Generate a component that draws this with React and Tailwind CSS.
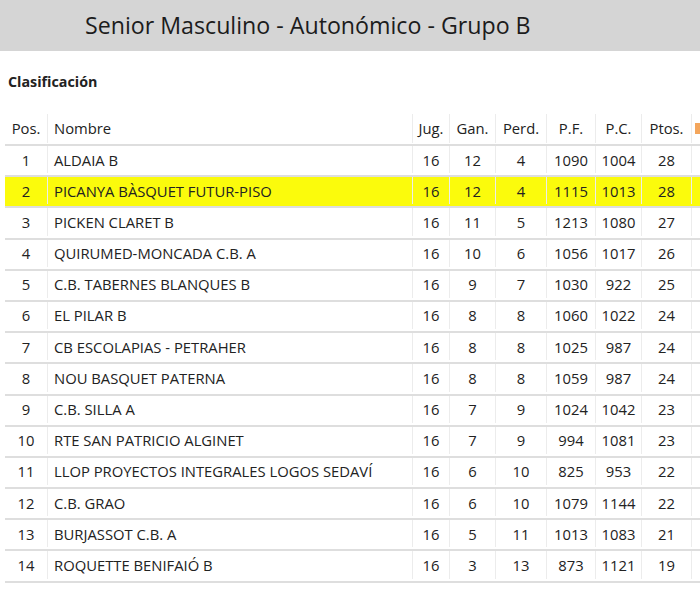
import React from 'react';

const rows = [
  [1, 'ALDAIA B', 16, 12, 4, 1090, 1004, 28],
  [2, 'PICANYA BÀSQUET FUTUR-PISO', 16, 12, 4, 1115, 1013, 28],
  [3, 'PICKEN CLARET B', 16, 11, 5, 1213, 1080, 27],
  [4, 'QUIRUMED-MONCADA C.B. A', 16, 10, 6, 1056, 1017, 26],
  [5, 'C.B. TABERNES BLANQUES B', 16, 9, 7, 1030, 922, 25],
  [6, 'EL PILAR B', 16, 8, 8, 1060, 1022, 24],
  [7, 'CB ESCOLAPIAS - PETRAHER', 16, 8, 8, 1025, 987, 24],
  [8, 'NOU BASQUET PATERNA', 16, 8, 8, 1059, 987, 24],
  [9, 'C.B. SILLA A', 16, 7, 9, 1024, 1042, 23],
  [10, 'RTE SAN PATRICIO ALGINET', 16, 7, 9, 994, 1081, 23],
  [11, 'LLOP PROYECTOS INTEGRALES LOGOS SEDAVÍ', 16, 6, 10, 825, 953, 22],
  [12, 'C.B. GRAO', 16, 6, 10, 1079, 1144, 22],
  [13, 'BURJASSOT C.B. A', 16, 5, 11, 1013, 1083, 21],
  [14, 'ROQUETTE BENIFAIÓ B', 16, 3, 13, 873, 1121, 19],
];

const cols = 'grid grid-cols-[43px_365px_37px_46px_51px_49px_46px_50px_8px]';
const cell = 'flex items-center justify-center border-r border-[#ececec]';

const App = () => {
  return (
    <div className="w-[700px] h-[603px] bg-white text-[#222] overflow-hidden" style={{ fontFamily: '"Open Sans", sans-serif' }}>
      {/* Header band */}
      <div className="h-[51px] bg-[#d5d5d5] flex items-center pl-[85px]">
        <h1 className="text-[23.2px] leading-none text-[#1c1c1c]">Senior Masculino - Autonómico - Grupo B</h1>
      </div>

      <div className="pl-2 pt-[21px] h-[63px]">
        <h2 className="text-[14.3px] font-bold leading-[20px]">Clasificación</h2>
      </div>

      {/* Table */}
      <div className="pl-[5px] text-[14.8px]">
        <div className={`${cols} h-[32px] pb-px border-b-2 border-[#dedede]`}>
          <div className={cell}>Pos.</div>
          <div className="flex items-center pl-[6px] border-r border-[#ececec]">Nombre</div>
          <div className={cell}>Jug.</div>
          <div className={cell}>Gan.</div>
          <div className={cell}>Perd.</div>
          <div className={cell}>P.F.</div>
          <div className={cell}>P.C.</div>
          <div className={cell}>Ptos.</div>
          <div className="flex items-center pl-[3px]">
            <span className="w-[5px] h-[11px] bg-[#f4a65c]" />
          </div>
        </div>
        {rows.map((r) => (
          <div
            key={r[0]}
            className={`${cols} h-[31.2px] pb-[2px] border-b-2 border-[#dedede] ${r[0] === 2 ? 'bg-[#fbfb0c]' : ''}`}
          >
            <div className={cell}>{r[0]}</div>
            <div className="flex items-center pl-[6px] border-r border-[#ececec] whitespace-nowrap">{r[1]}</div>
            {r.slice(2).map((v, i) => (
              <div key={i} className={cell}>{v}</div>
            ))}
            <div />
          </div>
        ))}
      </div>
    </div>
  );
};

export default App;
